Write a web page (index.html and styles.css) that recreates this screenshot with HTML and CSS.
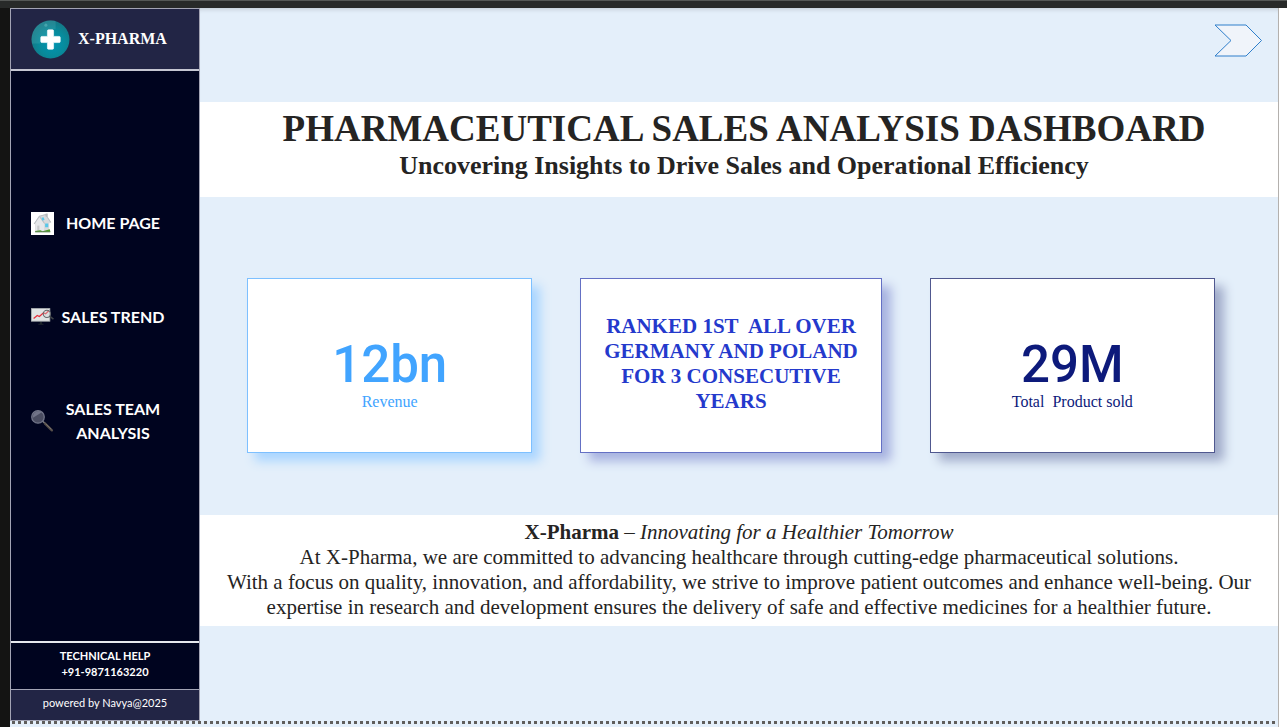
FILE: index.html
```html
<!DOCTYPE html>
<html lang="en">
<head>
<meta charset="utf-8">
<title>X-Pharma Sales Dashboard</title>
<link rel="stylesheet" href="styles.css">
</head>
<body>
<div class="topbar"></div>
<div class="window">
  <div class="report">
    <aside class="sidebar">
      <div class="brand">
        <svg class="logo" viewBox="0 0 38 38" aria-hidden="true">
          <defs><radialGradient id="orb" cx="55%" cy="60%" r="55%"><stop offset="0" stop-color="#0095b4"/><stop offset=".6" stop-color="#078b9c"/><stop offset="1" stop-color="#137a88"/></radialGradient></defs>
          <circle cx="19" cy="19" r="18.500" fill="url(#orb)"/>
          <path d="M1 23A18.500 18.500 0 0 1 24 1V9H16V16H9V23Z" fill="#6cc0c4" opacity=".2"/>
          <circle cx="14.500" cy="5" r="1.500" fill="#5fb6bc" opacity=".6"/>
          <path d="M17 9.500h4a1 1 0 0 1 1 1v5.500h5.500a1 1 0 0 1 1 1v4a1 1 0 0 1-1 1H22v5.500a1 1 0 0 1-1 1h-4a1 1 0 0 1-1-1V22h-5.500a1 1 0 0 1-1-1v-4a1 1 0 0 1 1-1H16v-5.500a1 1 0 0 1 1-1Z" fill="#fff" stroke="#fff" stroke-width=".6"/>
        </svg>
        <span>X-PHARMA</span>
      </div>
      <nav class="nav">
        <a class="nav-link" href="#home">
          <svg class="nav-icon" viewBox="0 0 22 22" aria-hidden="true">
            <rect width="22" height="22" fill="#fff"/>
            <path d="M4 19V11L3 11 8 4 14 2 19 9.500 17.500 11V19Z" fill="#d8dadc"/>
            <path d="M3.500 11 8 4.500 12.500 11V18.500H4.500V11Z" fill="#e6e8ea"/>
            <path d="M3 11.500 8 4 14 2.500 19 10M8 4 13 11" fill="none" stroke="#bbbfc3" stroke-width="1"/>
            <path d="M14 1.500h2v3h-2z" fill="#b4b8bc"/>
            <path d="M10 5.500 12 5l1 2.500-2 .8zM13.500 11h3v3.500h-3z" fill="#58c7e8"/>
            <path d="M6 13h2v5H6z" fill="#c8cacc"/>
            <path d="M4 18.200 9 17.500 11 18.500 18 16.500 18.500 19H4Z" fill="#4d9c27"/>
            <path d="M4 19h14.500" stroke="#47703e" stroke-width=".8"/>
          </svg>
          <span>HOME PAGE</span>
        </a>
        <a class="nav-link" href="#trend">
          <svg class="nav-icon" viewBox="0 0 22 22" aria-hidden="true">
            <path d="M8.500 15h2v2.500h-2zM7 17h5v1H7z" fill="#1c242b"/>
            <rect x=".5" y="2.500" width="17.500" height="12" fill="#e1e4e4" stroke="#b1b7b7" stroke-width=".8"/>
            <path d="M2.500 12 6 9 8 10 12 6.500 14 7.500 17 4.500" fill="none" stroke="#e4303c" stroke-width="1.200"/>
            <circle cx="15.200" cy="7.500" r="3.500" fill="#cdd4d655" stroke="#63686c" stroke-width="1"/>
            <path d="M18 10 21.500 12.500" stroke="#3e4347" stroke-width="1.500"/>
          </svg>
          <span>SALES TREND</span>
        </a>
        <a class="nav-link nav-link-tall" href="#team">
          <svg class="nav-icon" viewBox="0 0 22 22" aria-hidden="true">
            <path d="m11 10.500 3 3" stroke="#7a7b80" stroke-width="1.500"/>
            <path d="m13.500 13 6.500 6.500" stroke="#564f4a" stroke-width="2.200" stroke-linecap="round"/>
            <path d="m14 13 5.500 5.500" stroke="#91877d" stroke-width=".6"/>
            <circle cx="6.700" cy="6.600" r="6" fill="#4a4d61" stroke="#73778a" stroke-width="1.200"/>
            <path d="M2 7.500A5 5 0 0 1 10 2.500Z" fill="#85899c" opacity=".65"/>
          </svg>
          <span>SALES TEAM ANALYSIS</span>
        </a>
      </nav>
      <div class="help">TECHNICAL HELP<br>+91-9871163220</div>
      <div class="credit">powered by Navya@2025</div>
    </aside>
    <main class="page">
      <div class="toolbar">
        <button class="next" type="button" aria-label="Next page">
          <svg viewBox="0 0 48 33" aria-hidden="true"><path d="M1 1H32L47.500 16.500 32 32H1L17 16.500Z" fill="#f0f4fa" stroke="#2f7fcb"/></svg>
        </button>
      </div>
      <header class="title-band">
        <h1>PHARMACEUTICAL SALES ANALYSIS DASHBOARD</h1>
        <h2>Uncovering Insights to Drive Sales and Operational Efficiency</h2>
      </header>
      <section class="cards">
        <article class="card card-revenue">
          <strong class="value">12bn</strong>
          <span class="label">Revenue</span>
        </article>
        <article class="card card-rank">
          <p class="rank">RANKED 1ST&nbsp; ALL OVER GERMANY AND POLAND FOR 3 CONSECUTIVE YEARS</p>
        </article>
        <article class="card card-sold">
          <strong class="value">29M</strong>
          <span class="label">Total&nbsp; Product sold</span>
        </article>
      </section>
      <section class="about">
        <p><b>X-Pharma</b> – <i>Innovating for a Healthier Tomorrow</i></p>
        <p>At X-Pharma, we are committed to advancing healthcare through cutting-edge pharmaceutical solutions.</p>
        <p>With a focus on quality, innovation, and affordability, we strive to improve patient outcomes and enhance well-being. Our expertise in research and development ensures the delivery of safe and effective medicines for a healthier future.</p>
      </section>
    </main>
  </div>
  <div class="dots"></div>
</div>
</body>
</html>
```
FILE: styles.css
```css
* { box-sizing: border-box; }
body {
  margin: 0;
  min-height: 100vh;
  display: flex;
  flex-direction: column;
  background: #fff;
  font-family: "Liberation Serif", serif;
  color: #252423;
}
h1, h2, p { margin: 0; }
.topbar {
  height: 8px;
  background: #282a29;
  border-top: 1px solid #555856;
}
.window {
  flex: 1;
  display: flex;
  flex-direction: column;
  border-left: 10px solid #141413;
  padding-right: 8px;
}
.report {
  flex: 1;
  display: grid;
  grid-template-columns: 190px 1fr;
  background: #e4effa;
  border-right: 1px solid #b3b0ad;
}
.sidebar {
  display: flex;
  flex-direction: column;
  color: #fff;
  background: #00041f;
  border: 1px solid #a3a4b4;
  font-family: Lato, sans-serif;
  text-align: center;
}
.brand {
  display: flex;
  align-items: center;
  gap: 8px;
  height: 62px;
  padding-left: 20px;
  background: #222545;
  border-bottom: 2px solid #c5c6d2;
  font: bold 16px/20px "Liberation Serif", serif;
}
.logo { width: 39px; height: 39px; }
.nav {
  flex: 1;
  display: flex;
  flex-direction: column;
  gap: 46px;
  padding: 128px 31px 0 20px;
}
.nav-link {
  display: flex;
  align-items: center;
  min-height: 48px;
  gap: 4px;
  color: #fff;
  font-size: 16px;
  font-weight: bold;
  line-height: 24px;
  text-decoration: none;
}
.nav-link-tall { min-height: 68px; }
.nav-link span { flex: 1; }
.nav-icon { width: 23px; height: 23px; flex: none; }
.help {
  padding: 5px 0 9px;
  border-top: 2px solid #e6e8ee;
  font-size: 11px;
  font-weight: bold;
  line-height: 16px;
}
.credit {
  padding: 5px 0 9px;
  background: #222545;
  border-top: 1px solid #a3a4b4;
  font-size: 11px;
  line-height: 16px;
}
.page { display: flex; flex-direction: column; }
.toolbar {
  display: flex;
  justify-content: flex-end;
  height: 94px;
  padding: 16px 16px 0 0;
  box-shadow: inset 0 5px 5px -4px rgba(0, 0, 0, 0.18);
}
.next {
  width: 48px;
  height: 33px;
  padding: 0;
  border: 0;
  background: none;
}
.next svg { display: block; }
.title-band {
  background: #fff;
  padding: 6px 0 15px 10px;
  text-align: center;
}
h1 { font-size: 37px; line-height: 42px; }
h2 { font-size: 26px; line-height: 32px; }
.cards {
  display: grid;
  grid-template-columns: 286fr 302fr 286fr;
  gap: 48px;
  padding: 81px 63px 62px 47px;
}
.card {
  display: flex;
  flex-direction: column;
  align-items: center;
  justify-content: center;
  min-height: 175px;
  background: #fff;
  border: 1px solid currentColor;
}
.card-revenue { color: #41a4ff; border-color: #7dc0ff; box-shadow: 8px 8px 10px #a9d5ff; }
.card-rank { color: #2439cc; border-color: #6470c4; box-shadow: 9px 8px 10px #a6b1df; }
.card-sold { color: #0d1a7b; border-color: #50588f; box-shadow: 9px 8px 10px #a0abc9; }
.value {
  margin-top: 20px;
  font: 500 51px/52px Roboto, sans-serif;
}
.label { font-size: 16px; line-height: 22px; }
.rank {
  padding: 0 16px 4px;
  font-size: 21px;
  font-weight: bold;
  line-height: 25px;
  text-align: center;
}
.about {
  background: #fff;
  padding: 5px 20px 6px;
  font-size: 21px;
  line-height: 25px;
  text-align: center;
}
.dots {
  height: 6px;
  padding: 0 3px 0 2px;
  background: #e4effa;
  border-right: 1px solid #b3b0ad;
}
.dots::before {
  content: "";
  display: block;
  height: 3px;
  background: repeating-linear-gradient(90deg, #605e5c 0 3px, transparent 3px 6px);
}
```
